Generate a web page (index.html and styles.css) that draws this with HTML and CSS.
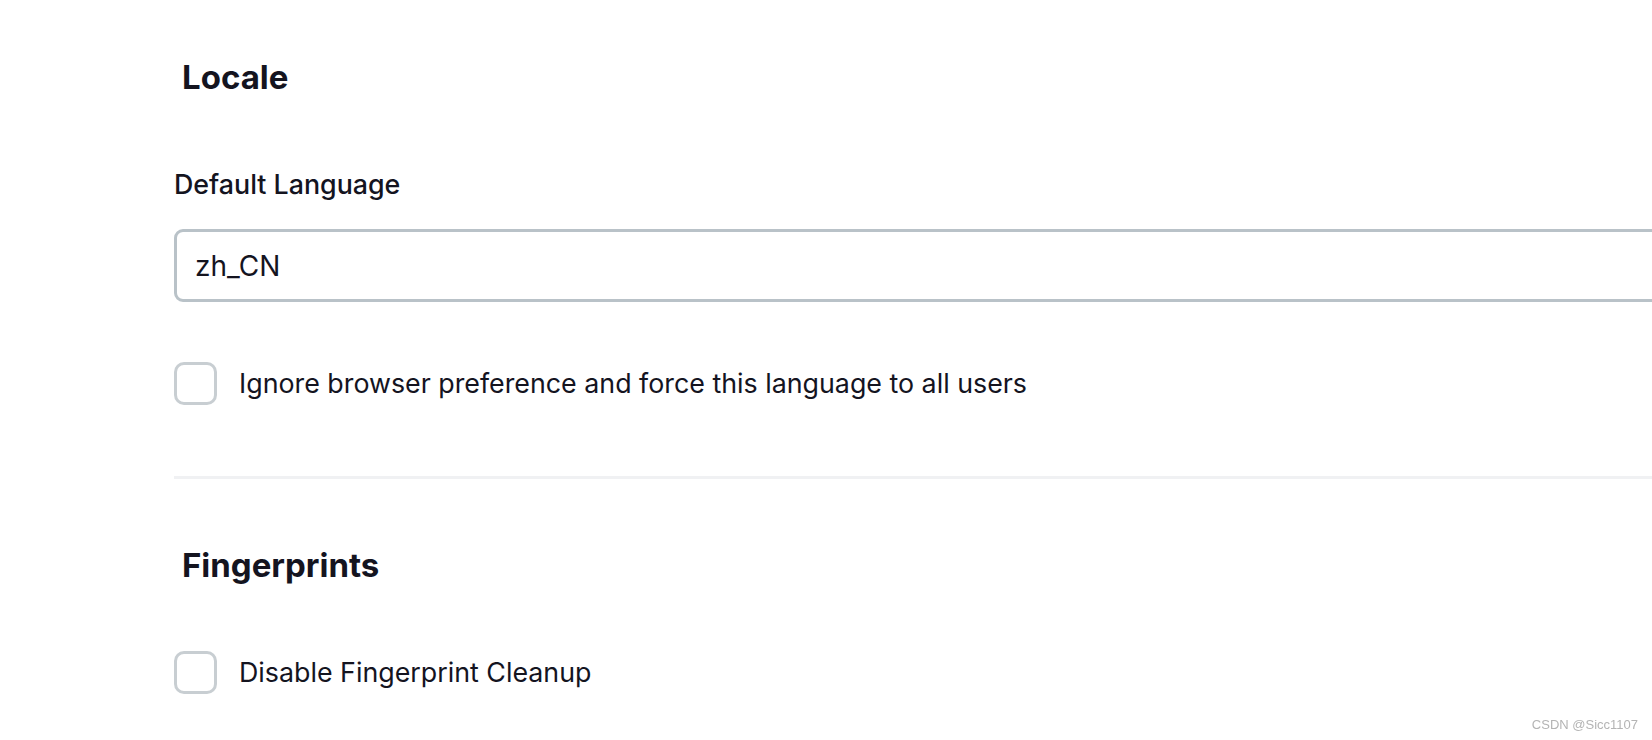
FILE: index.html
```html
<!DOCTYPE html>
<html lang="en">
<head>
    <meta charset="UTF-8">
    <meta name="viewport" content="width=device-width, initial-scale=1.0">
    <title>Configure System</title>
    <link rel="stylesheet" href="styles.css">
</head>
<body>
    <div class="page">
        <section class="section">
            <h2>Locale</h2>
            <div class="form-group">
                <label for="defaultLanguage">Default Language</label>
                <input type="text" id="defaultLanguage" value="zh_CN">
            </div>
            <label class="checkbox">
                <input type="checkbox" id="ignoreBrowser">
                <span>Ignore browser preference and force this language to all users</span>
            </label>
        </section>
        <hr class="divider">
        <section class="section">
            <h2>Fingerprints</h2>
            <label class="checkbox">
                <input type="checkbox" id="disableCleanup">
                <span>Disable Fingerprint Cleanup</span>
            </label>
        </section>
    </div>
    <div class="watermark">CSDN @Sicc1107</div>
</body>
</html>
```

FILE: styles.css
```css
* {
    box-sizing: border-box;
}
body {
    margin: 0;
    background-color: #fff;
    color: #14141f;
    font-family: Inter, "Noto Sans", sans-serif;
    overflow: hidden;
}
.page {
    width: 1800px;
    padding: 57.7px 0 0 174px;
}
h2 {
    margin: 0 0 71px;
    padding-left: 8px;
    font-size: 33px;
    line-height: 1.2;
    font-weight: 700;
}
.form-group {
    margin-bottom: 60px;
}
.form-group label {
    display: block;
    margin-bottom: 28.6px;
    font-size: 26.8px;
    line-height: 1.2;
    font-weight: 500;
}
.form-group input {
    display: block;
    width: 100%;
    height: 73px;
    padding: 0 18px;
    border: 3px solid #b9c2c8;
    border-radius: 9px;
    font-family: inherit;
    font-size: 28px;
    color: #14141f;
    outline: none;
}
.checkbox {
    display: flex;
    align-items: center;
    gap: 22px;
    font-size: 26.8px;
    line-height: 1.2;
}
.checkbox input {
    appearance: none;
    margin: 0;
    width: 43px;
    height: 43px;
    border: 3px solid #c8ced2;
    border-radius: 10px;
    background-color: #fff;
}
.divider {
    margin: 71px 0 67.2px;
    height: 3px;
    border: none;
    background-color: #f0f1f3;
}
.section:last-child h2 {
    margin-bottom: 65.2px;
}
.watermark {
    position: fixed;
    right: 14px;
    bottom: 8px;
    font-family: "Liberation Sans", Arial, sans-serif;
    font-size: 13px;
    color: #b4b4b4;
}
```
